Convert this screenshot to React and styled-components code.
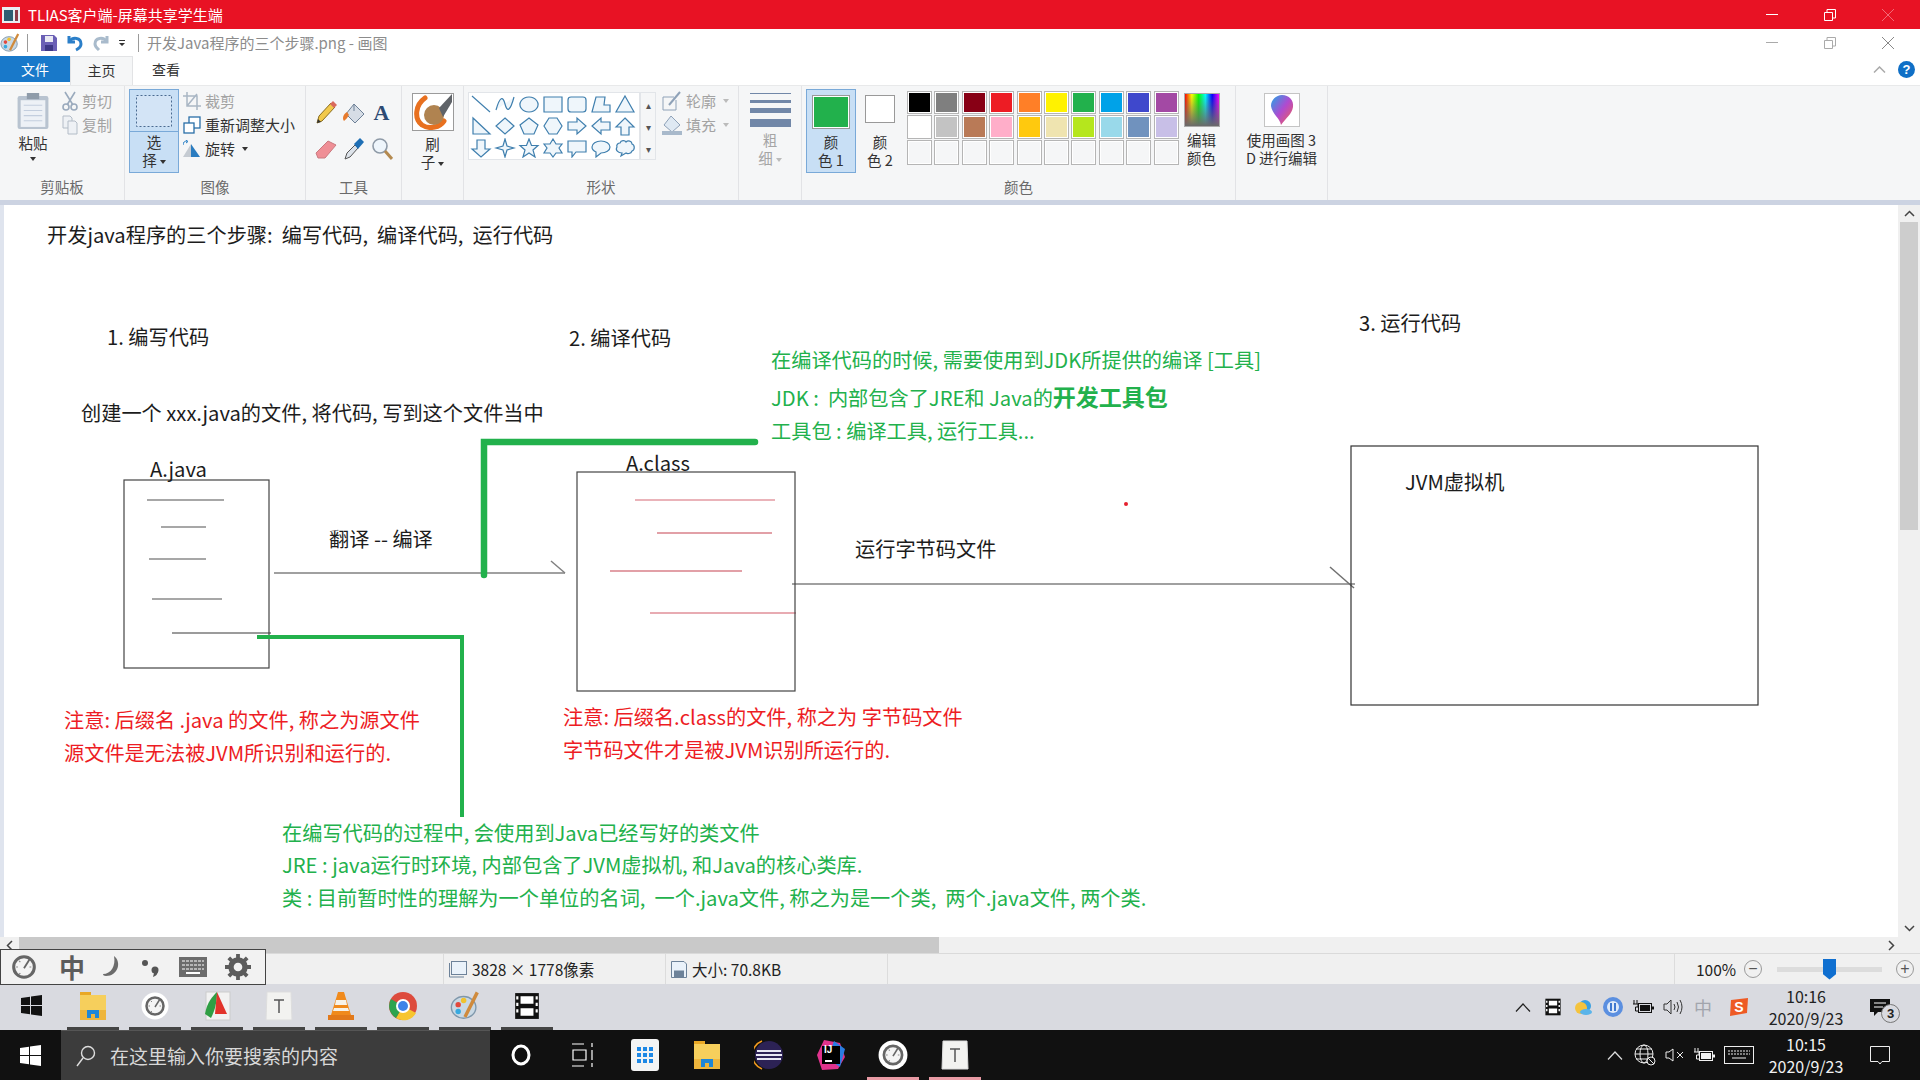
import React from 'react';
import styled, { createGlobalStyle } from 'styled-components';

const CANVAS_TOP = 205;

const GlobalStyle = createGlobalStyle`
	html, body { margin: 0; padding: 0; background: #fff; }
	body { font-family: "Noto Sans CJK SC", "Noto Sans", sans-serif; overflow: hidden; }
`;

const palette = [
	'#000000', '#7f7f7f', '#880015', '#ed1c24', '#ff7f27', '#fff200', '#22b14c', '#00a2e8', '#3f48cc', '#a349a4',
	'#ffffff', '#c3c3c3', '#b97a57', '#ffaec9', '#ffc90e', '#efe4b0', '#b5e61d', '#99d9ea', '#7092be', '#c8bfe7',
	null, null, null, null, null, null, null, null, null, null,
];

const shapePaths = [
	'M2 2L20 18', 'M2 16C6 2 9 2 11 10S16 18 20 3', 'M11 3a9 7.5 0 1 0 .01 0Z', 'M2 3H20V18H2Z', 'M5 3H17Q20 3 20 6V15Q20 18 17 18H5Q2 18 2 15V6Q2 3 5 3Z', 'M6 3H15L14 11H20V18H2Z', 'M11 2L20 18H2Z',
	'M3 2V18H20Z', 'M11 2L20 10L11 18L2 10Z', 'M11 2L20 9L16 18H6L2 9Z', 'M7 2H15L20 10L15 18H7L2 10Z', 'M2 6H11V2L20 10L11 18V14H2Z', 'M20 6H11V2L2 10L11 18V14H20Z', 'M11 2L20 11H15V19H7V11H2Z',
	'M7 2H15V11H20L11 19L2 11H7Z', 'M11 1L13 8L20 10L13 12L11 19L9 12L2 10L9 8Z', 'M11 1L13.5 7.5H20L15 12L17 19L11 15L5 19L7 12L2 7.5H8.5Z', 'M11 1L14 6H20L17 10L20 15H14L11 19L8 15H2L5 10L2 6H8Z', 'M2 3H20V14H10L6 19V14H2Z', 'M11 3C16 3 20 5.500 20 9S16 15 11 15L6 19V14C3.500 13 2 11 2 9C2 5.500 6 3 11 3Z', 'M6 5C7 2 11 2 12 4C14 2 18 3 18 6C21 7 21 12 18 13C17 16 13 16 12 15L7 18L8 15C4 15 1 12 3 9C2 7 4 5 6 5Z',
];

const drawing = [
	{ x1: 147, y1: 500, x2: 224, y2: 500, c: '#8a8a8a' },
	{ x1: 161, y1: 527, x2: 206, y2: 527, c: '#8a8a8a' },
	{ x1: 149, y1: 559, x2: 206, y2: 559, c: '#8a8a8a' },
	{ x1: 152, y1: 599, x2: 222, y2: 599, c: '#8a8a8a' },
	{ x1: 172, y1: 633, x2: 271, y2: 633, c: '#7a7a7a' },
	{ x1: 274, y1: 573, x2: 565, y2: 573, c: '#808080' },
	{ x1: 551, y1: 561, x2: 565, y2: 573, c: '#808080' },
	{ x1: 635, y1: 500, x2: 775, y2: 500, c: '#e39aa2' },
	{ x1: 657, y1: 533, x2: 772, y2: 533, c: '#d9808a' },
	{ x1: 610, y1: 571, x2: 742, y2: 571, c: '#d9808a' },
	{ x1: 650, y1: 613, x2: 796, y2: 613, c: '#e08f98' },
	{ x1: 792, y1: 584, x2: 1355, y2: 584, c: '#808080' },
	{ x1: 1330, y1: 567, x2: 1354, y2: 588, c: '#707070' },
];

const notes = [
	{ x: 47, y: 235, text: '开发java程序的三个步骤:  编写代码,  编译代码,  运行代码' },
	{ x: 107, y: 337, text: '1. 编写代码' },
	{ x: 569, y: 338, text: '2. 编译代码' },
	{ x: 1359, y: 323, text: '3. 运行代码' },
	{ x: 81, y: 413, text: '创建一个 xxx.java的文件, 将代码, 写到这个文件当中' },
	{ x: 150, y: 469, text: 'A.java' },
	{ x: 626, y: 463, text: 'A.class' },
	{ x: 329, y: 539, text: '翻译 -- 编译' },
	{ x: 855, y: 549, text: '运行字节码文件' },
	{ x: 1405, y: 482, text: 'JVM虚拟机' },
	{ x: 771, y: 360, tone: 'green', text: '在编译代码的时候, 需要使用到JDK所提供的编译 [工具]' },
	{ x: 771, y: 397, tone: 'green', text: 'JDK :  内部包含了JRE和 Java的', bold: '开发工具包' },
	{ x: 771, y: 431, tone: 'green', text: '工具包 : 编译工具, 运行工具...' },
	{ x: 64, y: 720, tone: 'red', text: '注意: 后缀名 .java 的文件, 称之为源文件' },
	{ x: 64, y: 753, tone: 'red', text: '源文件是无法被JVM所识别和运行的.' },
	{ x: 563, y: 717, tone: 'red', text: '注意: 后缀名.class的文件, 称之为 字节码文件' },
	{ x: 563, y: 750, tone: 'red', text: '字节码文件才是被JVM识别所运行的.' },
	{ x: 282, y: 833, tone: 'green', text: '在编写代码的过程中, 会使用到Java已经写好的类文件' },
	{ x: 282, y: 865, tone: 'green', text: 'JRE : java运行时环境, 内部包含了JVM虚拟机, 和Java的核心类库.' },
	{ x: 282, y: 898, tone: 'green', text: '类 : 目前暂时性的理解为一个单位的名词,  一个.java文件, 称之为是一个类,  两个.java文件, 两个类.' },
];

const PaintLogo = ({ size = 22 }) => (
	<svg width={size} height={size} viewBox="0 0 22 22">
		<ellipse cx="10" cy="12" rx="9" ry="8" fill="#c9d8e4" stroke="#7f97ab" />
		<circle cx="6" cy="10" r="2" fill="#e2483d" />
		<circle cx="10" cy="7" r="2" fill="#f0c22e" />
		<circle cx="6" cy="15" r="2" fill="#37a9e0" />
		<path d="M20 1L11 19" stroke="#d08a3c" strokeWidth="2.500" />
	</svg>
);

const WinLogo = ({ color }) => (
	<svg width="21" height="21" viewBox="0 0 21 21" fill={color}>
		<path d="M0 3L9 1.700V10H0ZM10 1.500L21 0V10H10ZM0 11H9V19.300L0 18ZM10 11H21V21L10 19.500Z" />
	</svg>
);

const Clock = ({ size = 28, ring = '#fff' }) => (
	<svg width={size} height={size} viewBox="0 0 28 28">
		<circle cx="14" cy="14" r="13.500" fill={ring} />
		<circle cx="14" cy="14" r="8.500" fill="#f4f4f4" stroke="#666" strokeWidth="2.500" />
		<path d="M14 15L19 7" stroke="#666" strokeWidth="1.500" />
		<path d="M10 9L11 10M7.500 14H9M18.500 14H20M10 20L11 19" stroke="#888" />
	</svg>
);

const Folder = () => (
	<svg width="28" height="30" viewBox="0 0 28 30">
		<path d="M1 1H12V4H1Z" fill="#e9a825" />
		<path d="M1 4H27V29H1Z" fill="#f6cf5c" />
		<path d="M1 19H27V29H1Z" fill="#eeb53c" />
		<path d="M8 27V19H20V27H16V23H12V27Z" fill="#1f86d6" />
	</svg>
);

const Film = ({ color = '#111', size = 26 }) => (
	<svg width={size} height={size} viewBox="0 0 26 26">
		<path d="M2 1H24V25H2Z" fill={color} />
		<path d="M7 4H19V11H7ZM7 15H19V22H7Z" fill="#fff" />
		<path d="M3 4H5V7H3ZM3 10H5V13H3ZM3 16H5V19H3ZM21 4H23V7H21ZM21 10H23V13H21ZM21 16H23V19H21Z" fill="#fff" />
	</svg>
);

const TNote = () => (
	<svg width="28" height="30" viewBox="0 0 28 30">
		<path d="M2 1H26L27 29H1Z" fill="#f2f2f0" stroke="#ddd" />
		<path d="M9 9H19M14 9V22" stroke="#555" strokeWidth="1.500" />
	</svg>
);

const Battery = ({ color, fill }) => (
	<svg width="22" height="16" viewBox="0 0 22 16">
		<path d="M2 1V5M5 1V5M1 5H6V8H3.500V12H6" stroke={color} strokeWidth="1" fill="none" />
		<rect x="6.500" y="4.500" width="13" height="9" fill="none" stroke={color} />
		<rect x="8" y="6" width="10" height="6" fill={fill} />
		<rect x="20" y="7.500" width="2" height="3" fill={color} />
	</svg>
);

const App = () => (
	<Page>
		<GlobalStyle />
		<TitleBar>
			<svg width="18" height="16" viewBox="0 0 18 16"><rect width="18" height="16" fill="#e8eef2" /><rect x="2" y="3" width="9" height="11" fill="#2e5d72" /><rect x="13" y="3" width="3" height="11" fill="#8c3b48" /></svg>
			<TitleText>TLIAS客户端-屏幕共享学生端</TitleText>
			<WindowButtons>
				<WindowButton>
					<svg width="12" height="2"><rect width="12" height="1" fill="#fff" /></svg>
				</WindowButton>
				<WindowButton>
					<svg width="12" height="12" viewBox="0 0 12 12" fill="none" stroke="#fff"><path d="M.5 3.500H8.500V11.500H.5ZM3 3V.5H11.500V9H9" /></svg>
				</WindowButton>
				<WindowButton>
					<svg width="12" height="12" viewBox="0 0 12 12" stroke="#f26a76"><path d="M0 0L12 12M12 0L0 12" /></svg>
				</WindowButton>
			</WindowButtons>
		</TitleBar>

		<QuickBar>
			<PaintLogo size={20} />
			<QuickDivider $ml={-1} $mr={4} />
			<svg width="18" height="18" viewBox="0 0 18 18"><path d="M1 1H14L17 4V17H1Z" fill="#6a5fb5" /><rect x="5" y="2" width="8" height="6" fill="#e9e9f3" /><rect x="5" y="11" width="8" height="6" fill="#3d3785" /></svg>
			<svg width="18" height="18" viewBox="0 0 18 18" fill="none" stroke="#2b7fc9" strokeWidth="3"><path d="M3 2V8H9" /><path d="M3 8C7 2 15 4 15 10C15 13 12 15 10 16" /></svg>
			<svg width="18" height="18" viewBox="0 0 18 18" fill="none" stroke="#a9bbcc" strokeWidth="3"><path d="M15 2V8H9" /><path d="M15 8C11 2 3 4 3 10C3 13 6 15 7 16" /></svg>
			<svg width="8" height="8" viewBox="0 0 8 8"><path d="M1 1H7V2H1ZM1 4H7L4 7Z" fill="#333" /></svg>
			<QuickDivider $ml={4} $mr={0} />
			<QuickTitle>开发Java程序的三个步骤.png - 画图</QuickTitle>
			<WindowButtons>
				<WindowButton>
					<svg width="12" height="2"><rect width="12" height="1" fill="#aaa" /></svg>
				</WindowButton>
				<WindowButton>
					<svg width="12" height="12" viewBox="0 0 12 12" fill="none" stroke="#aaa"><path d="M.5 3.500H8.500V11.500H.5ZM3 3V.5H11.500V9H9" /></svg>
				</WindowButton>
				<WindowButton>
					<svg width="12" height="12" viewBox="0 0 12 12" stroke="#888"><path d="M0 0L12 12M12 0L0 12" /></svg>
				</WindowButton>
			</WindowButtons>
		</QuickBar>

		<TabRow>
			<FileTab>文件</FileTab>
			<HomeTab>主页</HomeTab>
			<ViewTab>查看</ViewTab>
			<TabRight>
				<svg width="13" height="7" viewBox="0 0 13 7" fill="none" stroke="#aaa" strokeWidth="1.500"><path d="M1 6.500L6.500 1L12 6.500" /></svg>
				<HelpBadge>?</HelpBadge>
			</TabRight>
		</TabRow>

		<Ribbon>
			<Group $w={125}>
				<GroupBody $gap={6}>
					<LargeTool $w={46} $ml={6}>
						<svg width="34" height="37" viewBox="0 0 32 36"><rect x="1" y="3" width="30" height="32" rx="2" fill="#b8c3d0" /><rect x="4" y="7" width="24" height="26" fill="#edf1f6" /><rect x="10" y="0" width="12" height="6" fill="#8f9caa" /><path d="M7 12H25M7 17H25M7 22H25M7 27H25" stroke="#c3cede" /></svg>
						<LargeLabel>粘贴</LargeLabel>
						<Caret />
					</LargeTool>
					<SmallColumn>
						<SmallTool $off>
							<svg width="16" height="20" viewBox="0 0 16 20" fill="none" stroke="#9aaabd" strokeWidth="1.600"><path d="M3 1L11 14M13 1L5 14" /><circle cx="4" cy="16" r="3" /><circle cx="12" cy="16" r="3" /></svg>
							剪切
						</SmallTool>
						<SmallTool $off>
							<svg width="16" height="20" viewBox="0 0 16 20" fill="#eef1f5" stroke="#b3bcc7"><path d="M1 1H8L10 3V13H1Z" /><path d="M6 6H13L15 8V19H6Z" /></svg>
							复制
						</SmallTool>
					</SmallColumn>
				</GroupBody>
				<GroupName>剪贴板</GroupName>
			</Group>

			<Group $w={181}>
				<GroupBody>
					<SplitTool>
						<SplitTop>
							<svg width="36" height="32" viewBox="0 0 36 32"><rect x=".5" y=".5" width="35" height="31" fill="#d3e4f6" stroke="#4a6a90" strokeDasharray="2 2" /></svg>
						</SplitTop>
						<SplitBottom>选<br />择<Caret $inline /></SplitBottom>
					</SplitTool>
					<SmallColumn>
						<SmallTool $off>
							<svg width="18" height="18" viewBox="0 0 18 18" fill="none" stroke="#a9b6c4" strokeWidth="1.500"><path d="M4 0V14H18M0 4H14V18M14 2L4 14" /></svg>
							裁剪
						</SmallTool>
						<SmallTool>
							<svg width="18" height="18" viewBox="0 0 18 18" fill="#fff" stroke="#2a6fa8" strokeWidth="1.300"><rect x="6" y="1" width="11" height="11" /><rect x="1" y="7" width="10" height="10" /></svg>
							重新调整大小
						</SmallTool>
						<SmallTool>
							<svg width="18" height="18" viewBox="0 0 18 18"><path d="M8 4L17 17H8Z" fill="#2a7cc0" /><path d="M8 4V17H0Z" fill="#c5cbd2" /><path d="M0 5C0 2 2 1 4 1M3 0L5 1.500L3 3" stroke="#1f7ac4" fill="none" /></svg>
							旋转<Caret $inline />
						</SmallTool>
					</SmallColumn>
				</GroupBody>
				<GroupName>图像</GroupName>
			</Group>

			<Group $w={96}>
				<ToolGrid>
					<svg width="22" height="24" viewBox="0 0 22 24"><path d="M2 22L4 15L16 2L20 6L7 20Z" fill="#f2c94c" stroke="#8a6d1f" /><path d="M15 3L18 0L22 4L19 7Z" fill="#d96a5c" /><path d="M2 22L3 18L6 21Z" fill="#333" /></svg>
					<svg width="24" height="24" viewBox="0 0 24 24"><path d="M12 3L22 13L13 22L4 13Z" fill="#d6dde6" stroke="#6e8197" /><path d="M12 3V10" stroke="#6e8197" /><path d="M5 11C1 13 0 18 2 20C5 18 6 15 7 14Z" fill="#e77b2e" /></svg>
					<LetterA>A</LetterA>
					<svg width="22" height="22" viewBox="0 0 22 22"><path d="M1 15L13 3L21 7L10 20L3 20Z" fill="#ef8f96" stroke="#c97a80" /></svg>
					<svg width="22" height="24" viewBox="0 0 22 24"><path d="M2 22L4 16L12 8L15 11L7 20Z" fill="#dde3ea" stroke="#555" /><path d="M11 7L17 1L21 5L15 12Z" fill="#1f6fb5" /></svg>
					<svg width="22" height="24" viewBox="0 0 22 24" fill="none"><circle cx="9" cy="9" r="7" fill="#eef5fb" stroke="#8e9aa7" strokeWidth="1.600" /><path d="M14 14L21 22" stroke="#b48a50" strokeWidth="3" /></svg>
				</ToolGrid>
				<GroupName>工具</GroupName>
			</Group>

			<Group $w={62}>
				<GroupBody $center>
					<LargeTool $w={42}>
						<BrushTile>
							<svg width="38" height="38" viewBox="0 0 38 38"><path d="M11 5C1 12 0 26 8 32C16 37 26 34 30 28" fill="none" stroke="#e8701f" strokeWidth="5" strokeLinecap="round" /><ellipse cx="20" cy="22" rx="10" ry="10" fill="#b08350" /><path d="M25 15L38 1V9L29 24Z" fill="#5f6368" /></svg>
						</BrushTile>
						<LargeLabel>刷<br />子<Caret $inline /></LargeLabel>
					</LargeTool>
				</GroupBody>
				<GroupName>&nbsp;</GroupName>
			</Group>

			<Group $w={275}>
				<GroupBody $gap={6}>
					<Gallery>
						{shapePaths.map((d) => (
							<svg key={d} width="22" height="20" viewBox="0 0 22 20"><path d={d} fill="#eff6fb" stroke="#3f7fae" strokeWidth="1.200" /></svg>
						))}
					</Gallery>
					<GalleryScroll>
						<span>▴</span><span>▾</span><span>▾</span>
					</GalleryScroll>
					<SmallColumn>
						<SmallTool $off>
							<svg width="20" height="20" viewBox="0 0 20 20" fill="none" stroke="#8fa2b8"><path d="M1 6H12M1 6V19H14V9" /><path d="M7 14L18 1" strokeWidth="2" /></svg>
							轮廓<Caret $inline $off />
						</SmallTool>
						<SmallTool $off>
							<svg width="20" height="20" viewBox="0 0 20 20"><path d="M9 1L18 10L10 17L2 10Z" fill="#dfe9f3" stroke="#8fa2b8" /><rect x="0" y="16" width="20" height="4" fill="#a8b9cb" /></svg>
							填充<Caret $inline $off />
						</SmallTool>
					</SmallColumn>
				</GroupBody>
				<GroupName>形状</GroupName>
			</Group>

			<Group $w={63}>
				<GroupBody $center>
					<LargeTool $w={44}>
						<SizeStack>
							<SizeLine $h={1} /><SizeLine $h={3} /><SizeLine $h={5} /><SizeLine $h={8} />
						</SizeStack>
						<LargeLabel $off>粗<br />细<Caret $inline $off /></LargeLabel>
					</LargeTool>
				</GroupBody>
				<GroupName>&nbsp;</GroupName>
			</Group>

			<Group $w={434}>
				<GroupBody $gap={4}>
					<ColorButton $w={50} $active>
						<ColorChip $w={38} $h={36} $color="#22b14c" />
						<LargeLabel>颜<br />色 1</LargeLabel>
					</ColorButton>
					<ColorButton $w={40}>
						<ColorChip $w={30} $h={28} $color="#ffffff" />
						<LargeLabel>颜<br />色 2</LargeLabel>
					</ColorButton>
					<Swatches>
						{palette.map((color, i) => (
							<Swatch key={i} $color={color} />
						))}
					</Swatches>
					<LargeTool $w={38}>
						<RainbowTile />
						<LargeLabel>编辑<br />颜色</LargeLabel>
					</LargeTool>
				</GroupBody>
				<GroupName>颜色</GroupName>
			</Group>

			<Group $w={92}>
				<GroupBody $center>
					<LargeTool $w={86}>
						<DropTile>
							<svg width="24" height="32" viewBox="0 0 24 32"><defs><linearGradient id="drop" x1="0" y1="0" x2="1" y2="1"><stop offset="0" stopColor="#1fa8e8" /><stop offset=".5" stopColor="#b04ad0" /><stop offset="1" stopColor="#f5604a" /></linearGradient></defs><path d="M12 1C19 1 24 6 23 13C22 20 16 24 11 31C10 24 2 20 1 12C1 6 6 1 12 1Z" fill="url(#drop)" /></svg>
						</DropTile>
						<LargeLabel>使用画图 3<br />D 进行编辑</LargeLabel>
					</LargeTool>
				</GroupBody>
				<GroupName>&nbsp;</GroupName>
			</Group>
		</Ribbon>

		<Workspace>
			<Canvas>
				<Sketch width="1898" height="732" viewBox={`0 ${CANVAS_TOP} 1898 732`}>
					{drawing.map((l, i) => (
						<line key={i} x1={l.x1} y1={l.y1} x2={l.x2} y2={l.y2} stroke={l.c} strokeWidth="1.500" />
					))}
					<rect x="124" y="480" width="145" height="188" fill="none" stroke="#444" strokeWidth="1.200" />
					<rect x="577" y="472" width="218" height="219" fill="none" stroke="#444" strokeWidth="1.200" />
					<rect x="1351" y="446" width="407" height="259" fill="none" stroke="#333" strokeWidth="1.200" />
					<path d="M257 637H462V817" fill="none" stroke="#22b14c" strokeWidth="4" />
					<path d="M484 575V442H755" fill="none" stroke="#22b14c" strokeWidth="6.500" strokeLinecap="round" />
					<circle cx="1126" cy="504" r="2" fill="#e5202e" />
				</Sketch>
				{notes.map((n) => (
					<Note key={n.text} $x={n.x} $y={n.y - CANVAS_TOP} $tone={n.tone}>
						{n.text}{n.bold && <Strong>{n.bold}</Strong>}
					</Note>
				))}
			</Canvas>
			<VScroll>
				<ScrollArrow>
					<svg width="11" height="7" viewBox="0 0 11 7" fill="none" stroke="#444" strokeWidth="1.500"><path d="M1 6L5.500 1.500L10 6" /></svg>
				</ScrollArrow>
				<VTrack><VThumb /></VTrack>
				<ScrollArrow>
					<svg width="11" height="7" viewBox="0 0 11 7" fill="none" stroke="#444" strokeWidth="1.500"><path d="M1 1L5.500 5.500L10 1" /></svg>
				</ScrollArrow>
			</VScroll>
		</Workspace>

		<HScroll>
			<svg width="7" height="11" viewBox="0 0 7 11" fill="none" stroke="#444" strokeWidth="1.500"><path d="M6 1L1.500 5.500L6 10" /></svg>
			<HTrack><HThumb /></HTrack>
			<svg width="7" height="11" viewBox="0 0 7 11" fill="none" stroke="#444" strokeWidth="1.500"><path d="M1 1L5.500 5.500L1 10" /></svg>
			<HCorner />
		</HScroll>

		<StatusBar>
			<ImeBar>
				<Clock size={34} ring="transparent" />
				<ImeGlyph>中</ImeGlyph>
				<svg width="20" height="24" viewBox="0 0 20 22"><path d="M11 0C19 6 15 20 3 20C1 20 0 19 0 18C8 18 13 10 11 0Z" fill="#6c6c6c" /></svg>
				<svg width="20" height="24" viewBox="0 0 20 22" fill="#555"><circle cx="4" cy="7" r="3" /><circle cx="14" cy="14" r="3.500" /><path d="M17 14C17 18 15 20 12 21L13 17Z" /></svg>
				<svg width="28" height="20" viewBox="0 0 28 20"><rect width="28" height="20" fill="#6c6c6c" /><path d="M3 4H25M3 8H25M3 12H25" stroke="#fff" strokeDasharray="3 1" /><rect x="7" y="15" width="14" height="2" fill="#fff" /></svg>
				<svg width="26" height="26" viewBox="0 0 24 24"><circle cx="12" cy="12" r="6.500" fill="none" stroke="#5c5c5c" strokeWidth="5" /><path d="M12 0V24M0 12H24M3.500 3.500L20.500 20.500M20.500 3.500L3.500 20.500" stroke="#5c5c5c" strokeWidth="3.500" strokeDasharray="4 16" /></svg>
			</ImeBar>
			<StatusCell $w={444} />
			<StatusCell $w={222}>
				<svg width="18" height="17" viewBox="0 0 18 17" fill="#eaf2fa" stroke="#6d8299"><rect x="2.500" y=".5" width="15" height="13" /><path d="M.5 2V16H15" fill="none" /></svg>
				3828 × 1778像素
			</StatusCell>
			<StatusCell $w={222}>
				<svg width="16" height="17" viewBox="0 0 16 17" fill="#eaf2fa" stroke="#6d8299"><path d="M.5.5H13L15.500 3V16.500H.5Z" /><rect x="3.500" y="10" width="9" height="6.500" fill="#6d8299" /></svg>
				大小: 70.8KB
			</StatusCell>
			<StatusCell $w={787} />
			<ZoomCell>
				<ZoomText>100%</ZoomText>
				<RoundButton>−</RoundButton>
				<ZoomTrack><ZoomThumb /></ZoomTrack>
				<RoundButton>+</RoundButton>
			</ZoomCell>
		</StatusBar>

		<AppBar>
			<AppSlot><WinLogo color="#111" /></AppSlot>
			<AppSlot $open><Folder /></AppSlot>
			<AppSlot $open><Clock /></AppSlot>
			<AppSlot $open>
				<svg width="28" height="32" viewBox="0 0 28 32"><rect x="3" y="2" width="24" height="28" fill="#f2f2f2" stroke="#ccc" /><path d="M2 24C4 12 10 6 14 2C14 12 12 20 8 28Z" fill="#2f9e44" /><path d="M14 2L24 24L12 24Z" fill="#e2332b" /></svg>
			</AppSlot>
			<AppSlot $open><TNote /></AppSlot>
			<AppSlot $open>
				<svg width="28" height="30" viewBox="0 0 28 30"><path d="M11 1H17L24 24H4Z" fill="#f08a1c" /><path d="M9 9H19L20 14H8ZM7 17H21L22 20H6Z" fill="#f7f3ea" /><path d="M1 24H27V29H1Z" fill="#e2791a" /></svg>
			</AppSlot>
			<AppSlot $open>
				<svg width="30" height="30" viewBox="0 0 30 30"><circle cx="15" cy="15" r="14" fill="#dd4b3d" /><path d="M15 15L28 22A14 14 0 0 1 8 27Z" fill="#f7c52f" /><path d="M15 15L8 27A14 14 0 0 1 3 8Z" fill="#2ea44f" /><circle cx="15" cy="15" r="7" fill="#fff" /><circle cx="15" cy="15" r="5" fill="#3f83e8" /></svg>
			</AppSlot>
			<AppSlot $open><PaintLogo size={30} /></AppSlot>
			<AppSlot $open><Film size={28} /></AppSlot>
			<TrayRight>
				<TrayIcon $w={30}><svg width="16" height="9" viewBox="0 0 16 9" fill="none" stroke="#222" strokeWidth="1.200"><path d="M1 8.500L8 1L15 8.500" /></svg></TrayIcon>
				<TrayIcon $w={30}><Film size={18} /></TrayIcon>
				<TrayIcon $w={30}><svg width="20" height="18" viewBox="0 0 20 18"><circle cx="12" cy="8" r="6" fill="#3aa0e0" /><circle cx="8" cy="10" r="6" fill="#f4c33d" /><ellipse cx="13" cy="14" rx="6" ry="3" fill="#5ab4ea" /></svg></TrayIcon>
				<TrayIcon $w={30}><svg width="20" height="20" viewBox="0 0 20 20"><circle cx="10" cy="10" r="10" fill="#5b8fe0" /><circle cx="10" cy="10" r="6" fill="#dfeaf9" /><path d="M8 6V14M12 6V14" stroke="#3f78d0" strokeWidth="2" /></svg></TrayIcon>
				<TrayIcon $w={30}><Battery color="#111" fill="#111" /></TrayIcon>
				<TrayIcon $w={30}><svg width="20" height="16" viewBox="0 0 20 16" fill="none" stroke="#333"><path d="M1 5H4L8 1V15L4 11H1Z" /><path d="M11 5Q13 8 11 11M14 3Q17 8 14 13M17 1Q21 8 17 15" /></svg></TrayIcon>
				<TrayIcon $w={30}><TrayHan>中</TrayHan></TrayIcon>
				<TrayIcon $w={42}><svg width="20" height="18" viewBox="0 0 20 18"><path d="M2 2L19 0L18 15L1 18Z" fill="#ee5a24" /></svg><SogouS>S</SogouS></TrayIcon>
				<ClockBlock>10:16<br />2020/9/23</ClockBlock>
				<TrayIcon $w={68} $pr={12}>
					<svg width="20" height="17" viewBox="0 0 20 17"><path d="M0 0H20V13H8L4 17V13H0Z" fill="#111" /><path d="M4 4H16M4 8H13" stroke="#fff" /></svg>
					<CountBadge>3</CountBadge>
				</TrayIcon>
			</TrayRight>
		</AppBar>

		<DarkBar>
			<DarkStart><WinLogo color="#fff" /></DarkStart>
			<SearchBox>
				<svg width="20" height="22" viewBox="0 0 20 22" fill="none" stroke="#ddd" strokeWidth="1.400"><circle cx="12" cy="8" r="6.500" /><path d="M7 13L1 21" /></svg>
				<SearchText>在这里输入你要搜索的内容</SearchText>
			</SearchBox>
			<DarkSlot><svg width="20" height="24" viewBox="0 0 20 24"><ellipse cx="10" cy="12" rx="8" ry="9" fill="none" stroke="#fff" strokeWidth="3" /></svg></DarkSlot>
			<DarkSlot><svg width="22" height="24" viewBox="0 0 22 24" fill="none" stroke="#fff" strokeWidth="1.200"><path d="M0 1H12M0 23H12M1 7H14V17H1ZM20 0V4M20 7V17M20 20V24" /></svg></DarkSlot>
			<DarkSlot>
				<svg width="28" height="32" viewBox="0 0 28 32"><rect width="28" height="32" rx="3" fill="#f4f4f4" /><path d="M6 8H10V12H6ZM12 8H16V12H12ZM18 8H22V12H18ZM6 14H10V18H6ZM12 14H16V18H12ZM18 14H22V18H18ZM6 20H10V24H6ZM12 20H16V24H12ZM18 20H22V24H18Z" fill="#1e88e5" /></svg>
			</DarkSlot>
			<DarkSlot><Folder /></DarkSlot>
			<DarkSlot>
				<svg width="30" height="32" viewBox="0 0 30 32"><circle cx="15" cy="16" r="14" fill="#2c2255" /><path d="M8 2A15 15 0 0 0 8 30" fill="none" stroke="#f29a1f" strokeWidth="1.500" /><path d="M3 12H27M2 16H28M3 20H27" stroke="#e8e8f2" strokeWidth="2" /></svg>
			</DarkSlot>
			<DarkSlot>
				<svg width="30" height="32" viewBox="0 0 30 32"><path d="M8 1L24 4L29 18L22 30L6 31L1 16Z" fill="#e0338d" /><path d="M18 2L29 10L24 28L12 20Z" fill="#2a7de1" /><rect x="6" y="7" width="18" height="18" fill="#000" /><path d="M9 21H16V23H9Z" fill="#fff" /></svg>
				<IdeaText>IJ</IdeaText>
			</DarkSlot>
			<DarkSlot $open><Clock size={30} /></DarkSlot>
			<DarkSlot $open><TNote /></DarkSlot>
			<DarkTray>
				<TrayIcon $w={30}><svg width="16" height="9" viewBox="0 0 16 9" fill="none" stroke="#ddd" strokeWidth="1.200"><path d="M1 8.500L8 1L15 8.500" /></svg></TrayIcon>
				<TrayIcon $w={30}><svg width="22" height="22" viewBox="0 0 22 22" fill="none" stroke="#eee"><circle cx="10" cy="10" r="9" /><ellipse cx="10" cy="10" rx="4" ry="9" /><path d="M1 10H19M2 5H18M2 15H18" /><circle cx="17" cy="17" r="4" fill="#111" /><path d="M14 14L20 20" /></svg></TrayIcon>
				<TrayIcon $w={30}><svg width="20" height="14" viewBox="0 0 20 14" fill="none" stroke="#eee"><path d="M1 4H4L8 1V13L4 10H1ZM12 4L18 10M18 4L12 10" /></svg></TrayIcon>
				<TrayIcon $w={28}><Battery color="#f2f2f2" fill="#f2f2f2" /></TrayIcon>
				<TrayIcon $w={42}><svg width="30" height="18" viewBox="0 0 30 18" fill="none" stroke="#eee"><rect x=".5" y=".5" width="29" height="17" /><path d="M4 5H26M4 8H26" strokeDasharray="2 1" /><path d="M8 12H22" /></svg></TrayIcon>
				<DarkClock>10:15<br />2020/9/23</DarkClock>
				<TrayIcon $w={68} $pr={12}><svg width="20" height="19" viewBox="0 0 20 19" fill="none" stroke="#eee"><path d="M.5.5H19.500V15.500H12L10 18L8 15.500H.5Z" /></svg></TrayIcon>
			</DarkTray>
		</DarkBar>
	</Page>
);

export default App;

//Page Styles
const Page = styled.div`
	width: 1920px;
	height: 1080px;
	display: flex;
	flex-direction: column;
	overflow: hidden;
	color: #222;
`;

const TitleBar = styled.div`
	height: 29px;
	flex: none;
	display: flex;
	align-items: center;
	gap: 8px;
	padding-left: 2px;
	background: #e81224;
`;

const TitleText = styled.span`
	color: #fff;
	font-size: 15px;
`;

const WindowButtons = styled.div`
	margin-left: auto;
	display: flex;
	padding-right: 3px;
`;

const WindowButton = styled.div`
	width: 58px;
	height: 27px;
	display: flex;
	align-items: center;
	justify-content: center;
`;

const QuickBar = styled.div`
	height: 27px;
	flex: none;
	display: flex;
	align-items: center;
	gap: 8px;
	background: #fff;
`;

const QuickDivider = styled.div`
	width: 1px;
	height: 18px;
	background: #9a9a9a;
	margin: 0 ${(p) => p.$mr}px 0 ${(p) => p.$ml}px;
`;

const QuickTitle = styled.span`
	font-size: 15px;
	color: #8c8c8c;
`;

const TabRow = styled.div`
	height: 29px;
	flex: none;
	display: flex;
	align-items: flex-start;
	background: #fff;
`;

const FileTab = styled.div`
	width: 70px;
	height: 26px;
	background: #1979ca;
	color: #fff;
	font-size: 14px;
	line-height: 26px;
	text-align: center;
`;

const HomeTab = styled.div`
	width: 63px;
	height: 29px;
	box-sizing: border-box;
	background: #f5f6f7;
	border: 1px solid #e2e3e5;
	border-bottom: none;
	font-size: 14px;
	line-height: 27px;
	text-align: center;
	color: #333;
`;

const ViewTab = styled.div`
	margin-left: 19px;
	font-size: 14px;
	line-height: 27px;
	color: #333;
`;

const TabRight = styled.div`
	margin-left: auto;
	display: flex;
	align-items: center;
	gap: 12px;
	height: 27px;
	padding-right: 5px;
`;

const HelpBadge = styled.div`
	width: 17px;
	height: 17px;
	border-radius: 50%;
	background: #0f6fc6;
	color: #fff;
	font: bold 13px/17px "Liberation Sans", sans-serif;
	text-align: center;
`;

const Ribbon = styled.div`
	height: 120px;
	flex: none;
	display: flex;
	background: #f5f6f7;
	border-bottom: 5px solid #ccd3e2;
	border-top: 1px solid #e8e9ea;
	box-sizing: border-box;
`;

const Group = styled.div`
	width: ${(p) => p.$w}px;
	flex: none;
	box-sizing: border-box;
	border-right: 1px solid #e2e3e6;
	display: flex;
	flex-direction: column;
	align-items: stretch;
`;

const GroupBody = styled.div`
	flex: 1;
	display: flex;
	gap: ${(p) => p.$gap ?? 4}px;
	padding: 3px 4px 0;
	justify-content: ${(p) => (p.$center ? 'center' : 'flex-start')};
`;

const GroupName = styled.div`
	height: 24px;
	font-size: 14.500px;
	line-height: 22px;
	text-align: center;
	color: #6a6a6a;
`;

const LargeTool = styled.div`
	width: ${(p) => p.$w}px;
	flex: none;
	display: flex;
	flex-direction: column;
	align-items: center;
	padding-top: 4px;
	margin-left: ${(p) => p.$ml ?? 0}px;
`;

const LargeLabel = styled.div`
	margin-top: 4px;
	font-size: 14.500px;
	line-height: 18px;
	text-align: center;
	white-space: nowrap;
	color: ${(p) => (p.$off ? '#a5a5a5' : '#333')};
`;

const Caret = styled.span`
	display: inline-block;
	width: 0;
	height: 0;
	margin-left: ${(p) => (p.$inline ? '3px' : '0')};
	margin-top: ${(p) => (p.$inline ? '0' : '5px')};
	vertical-align: middle;
	border-left: 3px solid transparent;
	border-right: 3px solid transparent;
	border-top: 4px solid ${(p) => (p.$off ? '#bbb' : '#333')};
`;

const SmallColumn = styled.div`
	display: flex;
	flex-direction: column;
	gap: 3px;
	padding-top: 1px;
`;

const SmallTool = styled.div`
	height: 21px;
	display: flex;
	align-items: center;
	gap: 4px;
	font-size: 15px;
	white-space: nowrap;
	color: ${(p) => (p.$off ? '#a3a3a3' : '#333')};
`;

const SplitTool = styled.div`
	width: 50px;
	height: 84px;
	flex: none;
	box-sizing: border-box;
	border: 1px solid #79a9d8;
	background: #c8dff5;
	display: flex;
	flex-direction: column;
`;

const SplitTop = styled.div`
	height: 41px;
	border-bottom: 1px solid #79a9d8;
	display: flex;
	align-items: center;
	justify-content: center;
`;

const SplitBottom = styled.div`
	flex: 1;
	font-size: 14.500px;
	line-height: 18px;
	text-align: center;
	padding-top: 1px;
	color: #333;
`;

const ToolGrid = styled.div`
	flex: 1;
	display: grid;
	grid-template-columns: repeat(3, 28px);
	grid-auto-rows: 36px;
	justify-content: center;
	place-items: center;
	align-content: start;
	padding-top: 9px;
`;

const LetterA = styled.span`
	font: bold 22px/24px "Liberation Serif", serif;
	color: #2d4a73;
`;

const BrushTile = styled.div`
	width: 42px;
	height: 38px;
	box-sizing: border-box;
	border: 1px solid #9b9b9b;
	background: #fff;
	display: flex;
	align-items: center;
	justify-content: center;
	overflow: hidden;
`;

const Gallery = styled.div`
	width: 172px;
	height: 68px;
	flex: none;
	margin-top: 3px;
	background: #fff;
	border: 1px solid #e2e5e9;
	box-sizing: border-box;
	display: grid;
	grid-template-columns: repeat(7, 24px);
	grid-auto-rows: 22px;
	place-items: center;
`;

const GalleryScroll = styled.div`
	width: 16px;
	height: 68px;
	margin: 3px 0 0 -6px;
	flex: none;
	display: flex;
	flex-direction: column;
	justify-content: space-around;
	align-items: center;
	font-size: 10px;
	color: #555;
	border: 1px solid #e2e5e9;
	box-sizing: border-box;
`;

const SizeStack = styled.div`
	width: 41px;
	height: 34px;
	display: flex;
	flex-direction: column;
	justify-content: space-between;
`;

const SizeLine = styled.div`
	height: ${(p) => p.$h}px;
	background: #7187a8;
`;

const ColorButton = styled.div`
	width: ${(p) => p.$w}px;
	height: 84px;
	flex: none;
	box-sizing: border-box;
	border: 1px solid ${(p) => (p.$active ? '#79a9d8' : 'transparent')};
	background: ${(p) => (p.$active ? '#c8dff5' : 'transparent')};
	display: flex;
	flex-direction: column;
	align-items: center;
	justify-content: flex-end;
	padding-bottom: 3px;
`;

const ColorChip = styled.div`
	width: ${(p) => p.$w}px;
	height: ${(p) => p.$h}px;
	box-sizing: border-box;
	margin-bottom: auto;
	margin-top: 5px;
	background: ${(p) => p.$color};
	border: 1px solid #999;
	box-shadow: inset 0 0 0 1px #fff;
`;

const Swatches = styled.div`
	flex: none;
	margin: 2px 0 0 3px;
	display: grid;
	grid-template-columns: repeat(10, 25px);
	grid-template-rows: 23px 24px 25px;
	gap: 1px 2.400px;
`;

const Swatch = styled.div`
	box-sizing: border-box;
	border: 1px solid #b5b5b5;
	box-shadow: inset 0 0 0 1px #fff;
	background: ${(p) => p.$color || '#f5f6f7'};
`;

const RainbowTile = styled.div`
	width: 36px;
	height: 34px;
	box-sizing: border-box;
	border: 1px solid #aaa;
	background: linear-gradient(to bottom, transparent, #6a6a6a), linear-gradient(to right, #f00, #ff0, #0f0, #0ff, #00f, #f0f);
`;

const DropTile = styled.div`
	width: 36px;
	height: 34px;
	box-sizing: border-box;
	border: 1px solid #c4c4c4;
	background: #fff;
	display: flex;
	align-items: center;
	justify-content: center;
`;

const Workspace = styled.div`
	height: 732px;
	flex: none;
	display: flex;
	background: #fff;
`;

const Canvas = styled.div`
	position: relative;
	flex: 1;
	overflow: hidden;
	background: #fff;
	box-shadow: inset 4px 0 0 #dfe4ee;
`;

const Sketch = styled.svg`
	position: absolute;
	left: 0;
	top: 0;
`;

const toneColor = { green: '#22b14c', red: '#ed1c24' };

const Note = styled.div`
	position: absolute;
	left: ${(p) => p.$x}px;
	top: ${(p) => p.$y - 1}px;
	transform: translateY(-50%);
	font-size: 20.200px;
	white-space: pre;
	color: ${(p) => toneColor[p.$tone] || '#1c1c1c'};
`;

const Strong = styled.span`
	font-weight: 700;
	font-size: 23px;
`;

const VScroll = styled.div`
	width: 22px;
	flex: none;
	display: flex;
	flex-direction: column;
	background: #f0f0f0;
`;

const ScrollArrow = styled.div`
	height: 17px;
	display: flex;
	align-items: center;
	justify-content: center;
`;

const VTrack = styled.div`
	flex: 1;
	padding: 0 2px;
`;

const VThumb = styled.div`
	height: 308px;
	background: #cdcdcd;
`;

const HScroll = styled.div`
	height: 16px;
	flex: none;
	display: flex;
	align-items: center;
	gap: 6px;
	padding-left: 6px;
	background: #f0f0f0;
`;

const HTrack = styled.div`
	flex: 1;
	height: 16px;
`;

const HThumb = styled.div`
	width: 920px;
	height: 16px;
	background: #c9c9c9;
`;

const HCorner = styled.div`
	width: 19px;
`;

const StatusBar = styled.div`
	position: relative;
	height: 31px;
	flex: none;
	display: flex;
	background: #f0f0f0;
	border-top: 1px solid #dadada;
	box-sizing: border-box;
`;

const ImeBar = styled.div`
	position: absolute;
	left: 0;
	top: -5px;
	width: 266px;
	height: 36px;
	box-sizing: border-box;
	background: #f2f2f2;
	border: 1px solid #444;
	display: flex;
	align-items: center;
	justify-content: space-between;
	padding: 0 14px 0 6px;
	z-index: 2;
`;

const ImeGlyph = styled.span`
	font-size: 26px;
	font-weight: 700;
	line-height: 1;
	color: #5c5c5c;
`;

const StatusCell = styled.div`
	width: ${(p) => p.$w}px;
	flex: none;
	box-sizing: border-box;
	border-right: 1px solid #dcdcdc;
	display: flex;
	align-items: center;
	gap: 5px;
	padding-left: 5px;
	font-size: 15.500px;
	color: #222;
`;

const ZoomCell = styled.div`
	flex: 1;
	display: flex;
	align-items: center;
	padding-left: 21px;
	font-size: 15.500px;
`;

const ZoomText = styled.span`
	width: 48px;
`;

const RoundButton = styled.div`
	width: 18px;
	height: 18px;
	box-sizing: border-box;
	border: 1px solid #9a9a9a;
	border-radius: 50%;
	font: 16px/15px "Liberation Sans", sans-serif;
	text-align: center;
	color: #555;
`;

const ZoomTrack = styled.div`
	position: relative;
	width: 105px;
	height: 5px;
	margin: 0 14px 0 15px;
	background: #dcdcdc;
`;

const ZoomThumb = styled.div`
	position: absolute;
	left: 46px;
	top: -8px;
	width: 13px;
	height: 21px;
	background: #0f6fd0;
	clip-path: polygon(0 0, 100% 0, 100% 75%, 50% 100%, 0 75%);
`;

const AppBar = styled.div`
	height: 46px;
	flex: none;
	display: flex;
	align-items: stretch;
	background: #d9dae0;
`;

const AppSlot = styled.div`
	width: 62px;
	flex: none;
	display: flex;
	align-items: center;
	justify-content: center;
	position: relative;
	box-sizing: border-box;
	border-bottom: 3px solid transparent;
	&:after {
		content: '';
		display: ${(p) => (p.$open ? 'block' : 'none')};
		position: absolute;
		left: 5px;
		right: 5px;
		bottom: -3px;
		height: 3px;
		background: #444;
	}
`;

const TrayRight = styled.div`
	margin-left: auto;
	display: flex;
	align-items: center;
`;

const TrayIcon = styled.div`
	position: relative;
	width: ${(p) => p.$w}px;
	height: 30px;
	flex: none;
	box-sizing: border-box;
	padding-right: ${(p) => p.$pr ?? 0}px;
	display: flex;
	align-items: center;
	justify-content: center;
`;

const TrayHan = styled.span`
	font-size: 18px;
	color: #a2a5ad;
`;

const SogouS = styled.span`
	position: absolute;
	font: bold 14px "Liberation Sans", sans-serif;
	color: #fff;
`;

const ClockBlock = styled.div`
	width: 92px;
	font-size: 16px;
	line-height: 22px;
	text-align: center;
	color: #222;
`;

const CountBadge = styled.span`
	position: absolute;
	left: 29px;
	top: 12px;
	width: 19px;
	height: 19px;
	box-sizing: border-box;
	border-radius: 50%;
	border: 1px solid #777;
	background: #d9dae0;
	font: bold 13px/17px "Liberation Sans", sans-serif;
	text-align: center;
`;

const DarkBar = styled.div`
	height: 50px;
	flex: none;
	display: flex;
	align-items: stretch;
	background: #111;
`;

const DarkStart = styled.div`
	width: 61px;
	flex: none;
	display: flex;
	align-items: center;
	justify-content: center;
`;

const SearchBox = styled.div`
	width: 429px;
	flex: none;
	display: flex;
	align-items: center;
	gap: 14px;
	padding-left: 15px;
	box-sizing: border-box;
	background: #3c3c3c;
	border-top: 1px solid #555;
`;

const SearchText = styled.span`
	font-size: 19px;
	color: #d8d8d8;
`;

const DarkSlot = styled.div`
	position: relative;
	width: 62px;
	flex: none;
	display: flex;
	align-items: center;
	justify-content: center;
	&:after {
		content: '';
		display: ${(p) => (p.$open ? 'block' : 'none')};
		position: absolute;
		left: 5px;
		right: 5px;
		bottom: 0;
		height: 3px;
		background: #e89aa4;
	}
`;

const IdeaText = styled.span`
	position: absolute;
	left: 24px;
	top: 14px;
	font: bold 10px "Liberation Sans", sans-serif;
	color: #fff;
`;

const DarkTray = styled.div`
	margin-left: auto;
	display: flex;
	align-items: center;
`;

const DarkClock = styled(ClockBlock)`
	color: #f0f0f0;
`;
